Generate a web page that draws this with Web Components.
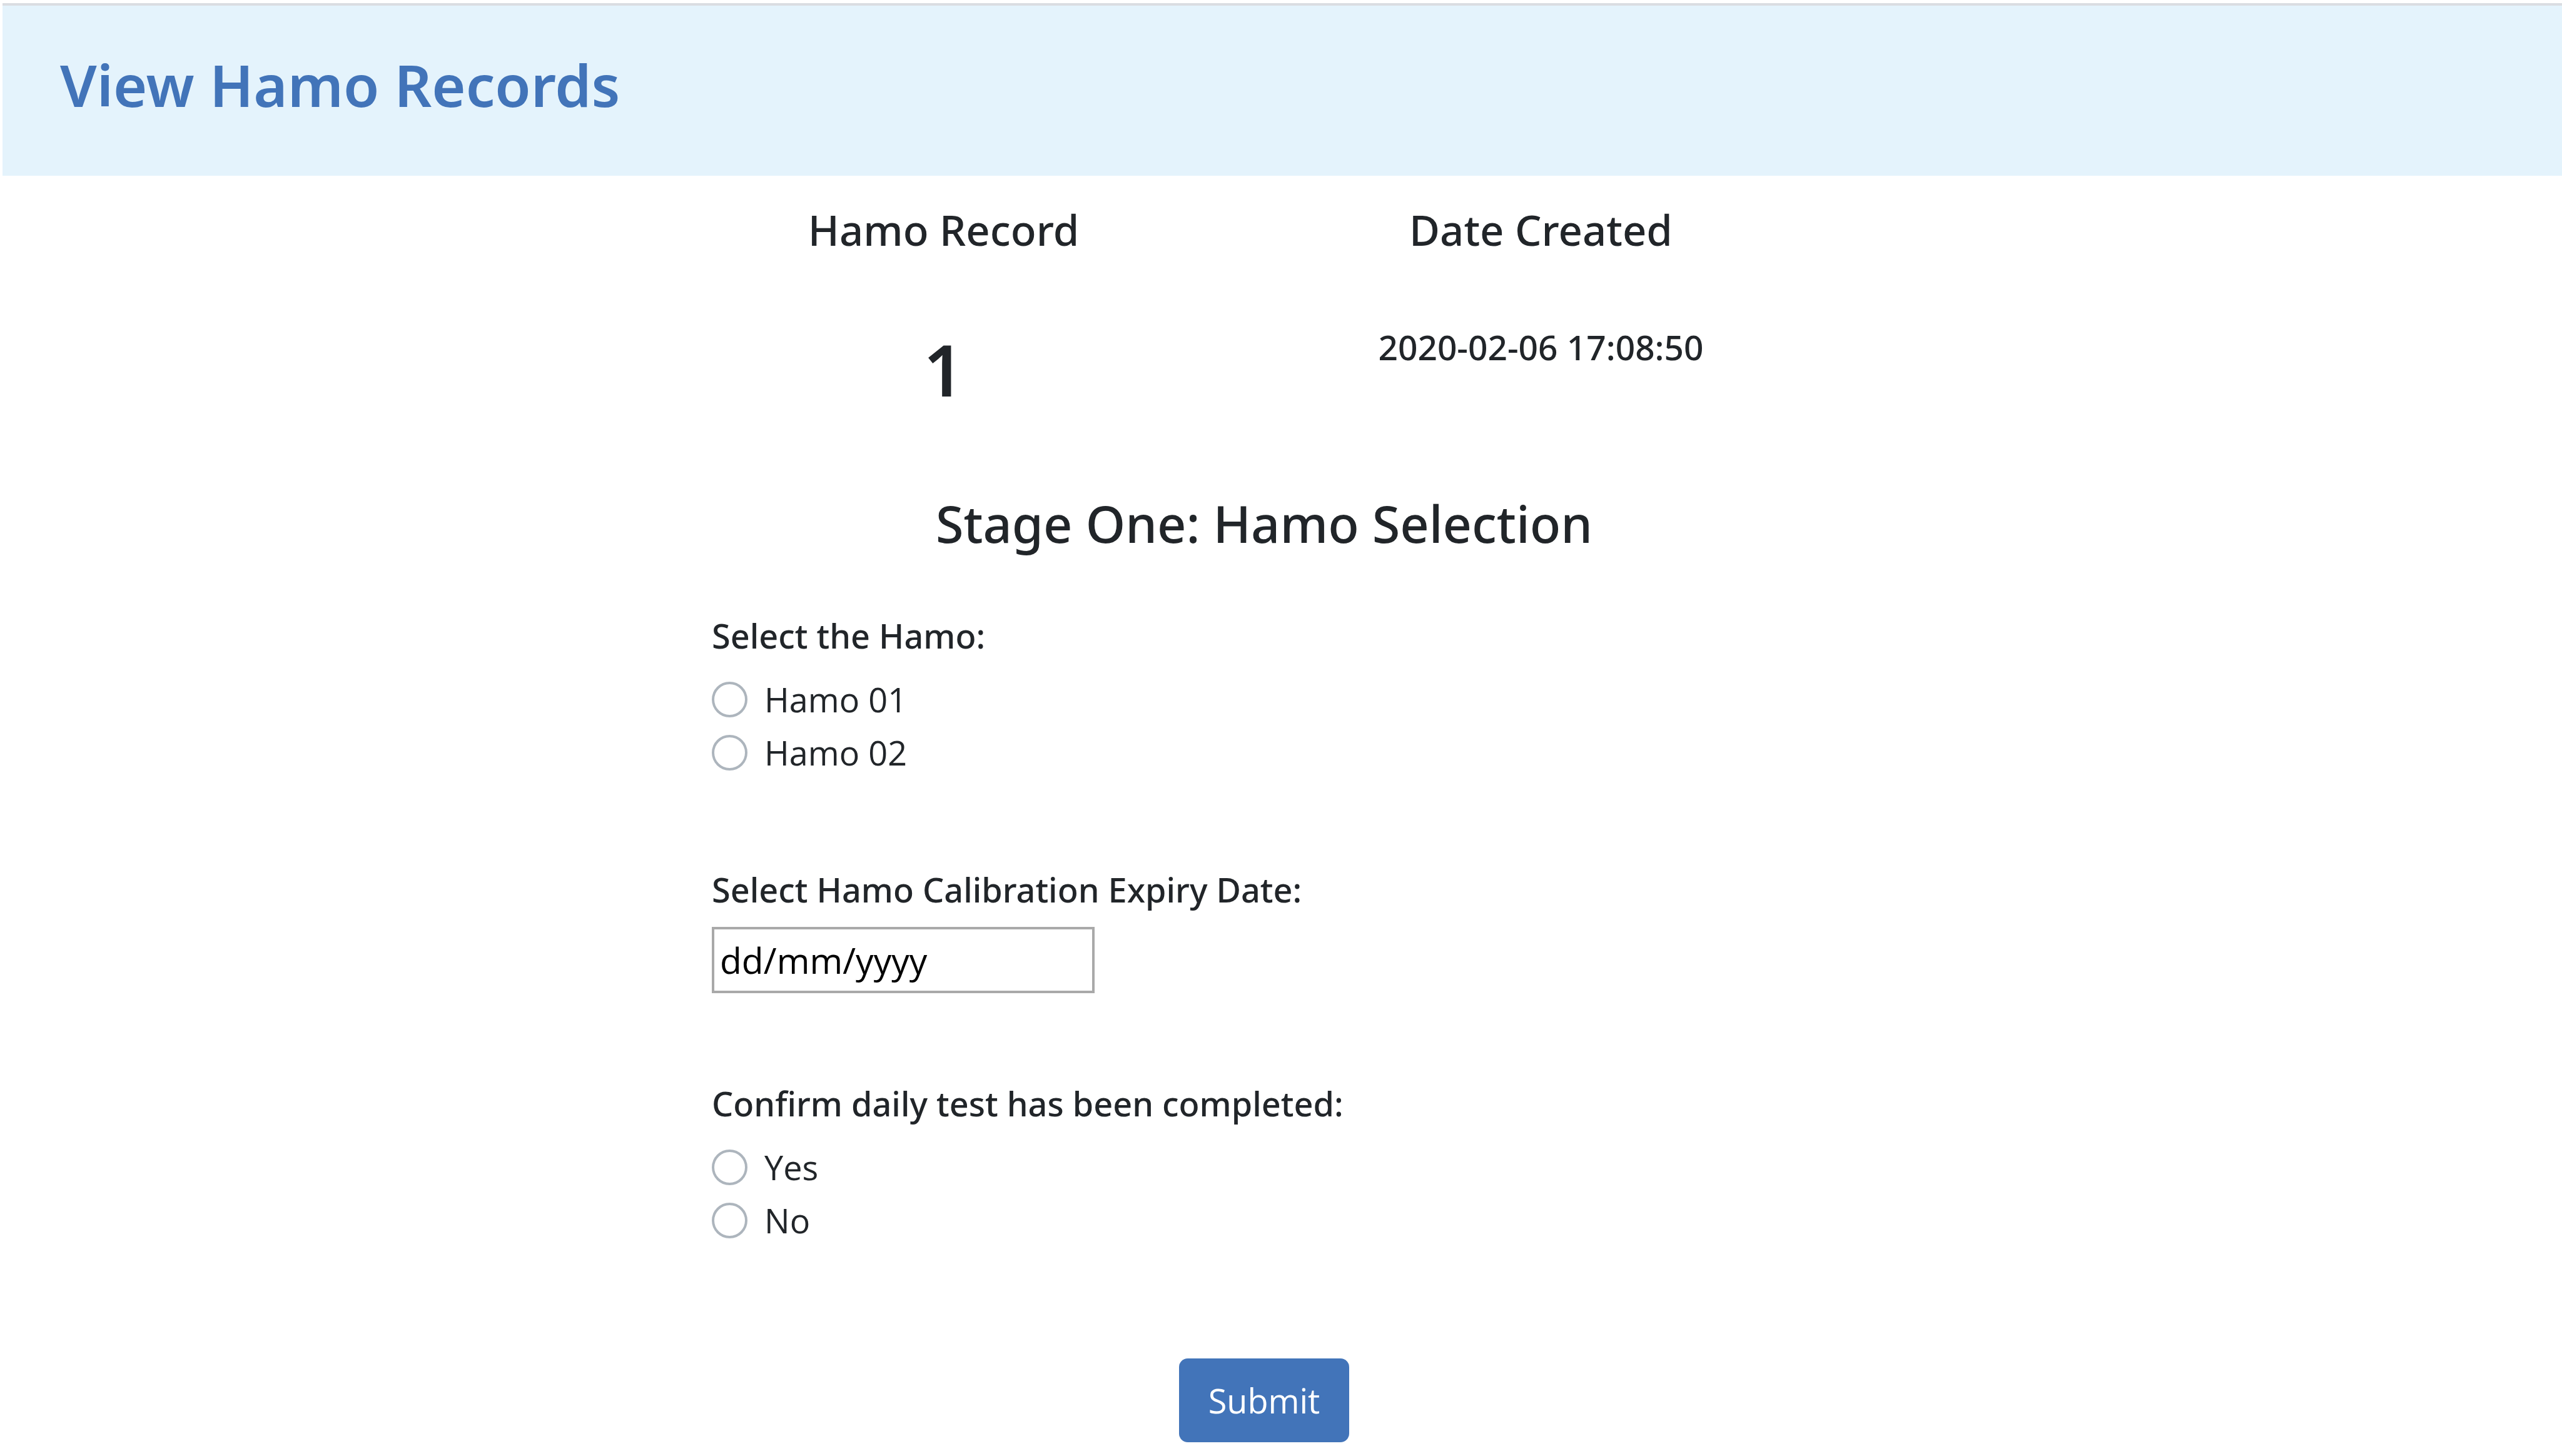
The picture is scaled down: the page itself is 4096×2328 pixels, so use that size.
<!DOCTYPE html>
<html lang="en">
<head>
<meta charset="utf-8">
<title>View Hamo Records</title>
<style>
  body {
    margin: 0;
    background: #fff;
    color: #212529;
    font-family: "Noto Sans", "Open Sans", sans-serif;
    --body-font: "Open Sans", "Noto Sans", sans-serif;
    --primary: #4274b9;
    --band: #e4f3fc;
    --line: #dadde2;
    --control: #adb5bd;
  }
</style>
</head>
<body>
<hamo-page>
  <page-banner slot="banner">View Hamo Records</page-banner>
  <record-summary slot="summary" record="1" created="2020-02-06 17:08:50"></record-summary>
  <stage-form heading="Stage One: Hamo Selection">
    <radio-group legend="Select the Hamo:" name="hamo" options="Hamo 01|Hamo 02"></radio-group>
    <date-field label="Select Hamo Calibration Expiry Date:" placeholder="dd/mm/yyyy"></date-field>
    <radio-group legend="Confirm daily test has been completed:" name="daily-test" options="Yes|No"></radio-group>
    <submit-button slot="actions">Submit</submit-button>
  </stage-form>
</hamo-page>

<script>
  const attach = (host, html) => {
    host.attachShadow({ mode: "open" }).innerHTML = html;
  };

  customElements.define("hamo-page", class extends HTMLElement {
    connectedCallback() {
      attach(this, `
        <style>
          :host { display: block; padding-top: 5px; }
          main { display: flex; flex-direction: column; gap: 130px; max-width: 1910px; margin: 0 auto; }
          .content { padding: 45px 124px 22px 0; }
        </style>
        <slot name="banner"></slot>
        <div class="content">
          <main><slot name="summary"></slot><slot></slot></main>
        </div>`);
    }
  });

  customElements.define("page-banner", class extends HTMLElement {
    connectedCallback() {
      attach(this, `
        <style>
          :host { display: block; margin-left: 4px; }
          header { padding: 69px 92px 89px; border-top: 4px solid var(--line); background: var(--band); }
          h1 { margin: 0; font-size: 93px; line-height: 114px; font-weight: 600; color: var(--primary); }
        </style>
        <header><h1><slot></slot></h1></header>`);
    }
  });

  customElements.define("record-summary", class extends HTMLElement {
    connectedCallback() {
      attach(this, `
        <style>
          :host { display: block; }
          table { width: 100%; table-layout: fixed; border-collapse: collapse; text-align: center; }
          th, td { padding: 0; vertical-align: top; font-weight: 500; }
          th { padding-bottom: 114px; font-size: 67px; line-height: 82px; }
          .record { font-size: 113px; line-height: 136px; font-weight: 600; }
          .created { font-size: 55px; line-height: 66px; }
        </style>
        <table>
          <thead><tr><th scope="col">Hamo Record</th><th scope="col">Date Created</th></tr></thead>
          <tbody><tr>
            <td class="record">${this.getAttribute("record")}</td>
            <td class="created">${this.getAttribute("created")}</td>
          </tr></tbody>
        </table>`);
    }
  });

  customElements.define("stage-form", class extends HTMLElement {
    connectedCallback() {
      attach(this, `
        <style>
          :host { display: block; padding: 0 37px 0 107px; }
          h2 { margin: 0 0 98px; font-size: 81px; line-height: 98px; font-weight: 500; text-align: center; }
          form { display: flex; flex-direction: column; }
          .fields { display: flex; flex-direction: column; gap: 144px; }
          .actions { display: flex; justify-content: center; margin-top: 178px; }
        </style>
        <h2>${this.getAttribute("heading")}</h2>
        <form>
          <div class="fields"><slot></slot></div>
          <div class="actions"><slot name="actions"></slot></div>
        </form>`);
    }
  });

  customElements.define("radio-group", class extends HTMLElement {
    connectedCallback() {
      const name = this.getAttribute("name");
      const rows = this.getAttribute("options").split("|").map((text, i) => `
        <div class="option">
          <input type="radio" id="${name}-${i}" name="${name}" value="${text}">
          <label for="${name}-${i}">${text}</label>
        </div>`).join("");
      attach(this, `
        <style>
          :host { display: block; }
          fieldset { margin: 0; padding: 0; border: 0; min-width: 0; }
          legend { padding: 0; margin-bottom: 27px; font-size: 54px; line-height: 65px; font-weight: 500; }
          .option { display: flex; align-items: center; gap: 27px; height: 85px; }
          input { appearance: none; flex: none; box-sizing: border-box; width: 57px; height: 57px; margin: 0;
                  border: 4px solid var(--control); border-radius: 50%; background: #fff; }
          input:checked { border-width: 17px; border-color: var(--primary); }
          label { font-family: var(--body-font); font-size: 54px; line-height: 85px; }
        </style>
        <fieldset><legend>${this.getAttribute("legend")}</legend>${rows}</fieldset>`);
    }
  });

  customElements.define("date-field", class extends HTMLElement {
    connectedCallback() {
      attach(this, `
        <style>
          :host { display: flex; flex-direction: column; align-items: flex-start; gap: 27px; }
          label { font-size: 54px; line-height: 65px; font-weight: 500; }
          input { box-sizing: border-box; width: 612px; height: 106px; margin: 0; padding: 0 9px;
                  border: 4px solid #a9a9a9; border-radius: 0; background: #fff;
                  color: #000; font-family: var(--body-font); font-size: 57px; }
          input::placeholder { color: #000; opacity: 1; }
        </style>
        <label for="date">${this.getAttribute("label")}</label>
        <input type="text" id="date" name="expiry" placeholder="${this.getAttribute("placeholder")}">`);
    }
  });

  customElements.define("submit-button", class extends HTMLElement {
    connectedCallback() {
      attach(this, `
        <style>
          :host { display: block; }
          button { display: block; min-width: 272px; height: 134px; padding: 0 40px; border: 0; border-radius: 14px;
                   background: var(--primary); color: #fff; font-family: var(--body-font); font-size: 54px; line-height: 85px; }
        </style>
        <button type="submit"><slot></slot></button>`);
    }
  });
</script>
</body>
</html>
